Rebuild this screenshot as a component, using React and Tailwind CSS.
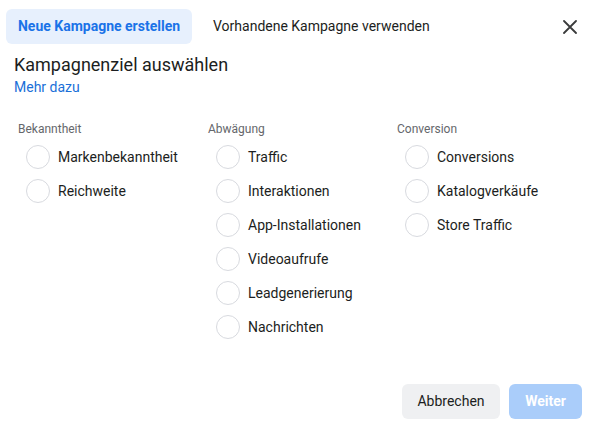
import React from "react";

const columns = [
  { title: "Bekanntheit", items: ["Markenbekanntheit", "Reichweite"] },
  {
    title: "Abwägung",
    items: [
      "Traffic",
      "Interaktionen",
      "App-Installationen",
      "Videoaufrufe",
      "Leadgenerierung",
      "Nachrichten",
    ],
  },
  { title: "Conversion", items: ["Conversions", "Katalogverkäufe", "Store Traffic"] },
];

export default function App() {
  return (
    <div
      className="w-[598px] h-[429px] bg-white flex flex-col text-[#1c1e21]"
      style={{ fontFamily: "Roboto, 'Liberation Sans', sans-serif" }}
    >
      <div className="flex items-center pt-[9px] pl-[6px] pr-[16px]">
        <div className="h-[35px] w-[186px] flex items-center justify-center rounded-md bg-[#e7f0fd] text-[#1a73e8] text-[14px] font-bold">
          Neue Kampagne erstellen
        </div>
        <div className="h-[35px] flex items-center ml-[21px] text-[14px] text-[#1c1e21]">
          Vorhandene Kampagne verwenden
        </div>
        <button className="ml-auto w-[24px] h-[24px] flex items-center justify-center">
          <svg width="14" height="14" viewBox="0 0 14 14">
            <path d="M1 1L13 13M13 1L1 13" stroke="#3a3b3c" strokeWidth="1.8" strokeLinecap="round" />
          </svg>
        </button>
      </div>
      <div className="pl-[14px] mt-[9px]">
        <div className="text-[18px] leading-[24px] text-[#1c1e21]">Kampagnenziel auswählen</div>
        <div className="text-[14px] leading-[20px] text-[#1a6fd8]">Mehr dazu</div>
      </div>
      <div className="grid grid-cols-[190px_189px_190px] pl-[18px] mt-[24px]">
        {columns.map((col) => (
          <div key={col.title} className="flex flex-col">
            <div className="text-[12px] leading-[16px] text-[#65676b] mb-[3px]">{col.title}</div>
            {col.items.map((item) => (
              <div key={item} className="h-[34px] flex items-center pl-[8px] gap-[8px]">
                <div className="w-[24px] h-[24px] rounded-full border border-[#d8dadf] bg-white" />
                <span className="text-[14px] text-[#1c1e21]">{item}</span>
              </div>
            ))}
          </div>
        ))}
      </div>
      <div className="mt-auto flex justify-end gap-[9px] pr-[16px] pb-[10px]">
        <button className="h-[35px] w-[98px] rounded-md bg-[#eff0f2] text-[14px] text-[#1c1e21]">
          Abbrechen
        </button>
        <button className="h-[35px] w-[73px] rounded-md bg-[#aacdfa] text-[14px] font-bold text-white">
          Weiter
        </button>
      </div>
    </div>
  );
}
